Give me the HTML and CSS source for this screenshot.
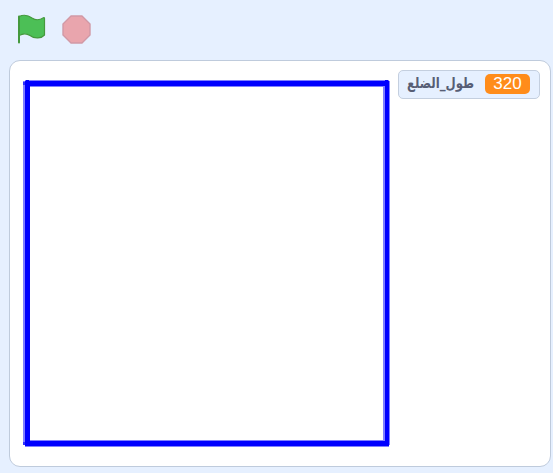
FILE: index.html
```
<!DOCTYPE html>
<html lang="ar">
<head>
<meta charset="utf-8">
<title>Stage</title>
<link rel="stylesheet" href="styles.css">
</head>
<body>
<header class="controls">
  <svg class="icon" viewBox="0 0 30 30" aria-label="Go">
    <path d="M3 2.500C7.500 .5 12 1 16 4C20.500 7 24 6 27.500 3.700Q28.500 3.200 28.500 4.500V21C25.500 24.500 18.500 25 14 21.500C10 18.800 7 19.300 3 21.500Z" fill="#4cbf56" stroke="#45993d" stroke-width="1.200" stroke-linejoin="round"/>
    <path d="M3 2.500V28.500" fill="none" stroke="#45993d" stroke-width="2" stroke-linecap="round"/>
  </svg>
  <svg class="icon" viewBox="0 0 30 30" aria-label="Stop">
    <path d="M10 2H21L29 10V21L21 29H10L2 21V10Z" fill="#e9a5ad" stroke="#d199a6" stroke-width="1.400" stroke-linejoin="round"/>
  </svg>
</header>
<main class="stage">
  <svg class="drawing" viewBox="0 0 367 368" shape-rendering="crispEdges">
    <g fill="#8080ff">
      <path d="M2 1H366V8H2ZM2 361H366V368H2ZM0 2H7V366H0ZM360 2H367V366H360Z"/>
    </g>
    <path d="M2 2H366V367H2ZM7 7V362H362V7Z" fill="#00f" fill-rule="evenodd"/>
    <path d="M3 1H6V2H3ZM362 1H365V2H362Z" fill="#00f"/>
    <path d="M0 3H2V6H0ZM0 363H2V366H0Z" fill="#3030ff"/>
  </svg>
  <div class="monitor" dir="ltr">
    <svg class="label" viewBox="0 0 68 28"><text x="0" y="17" textLength="67" lengthAdjust="spacingAndGlyphs">طول_الضلع</text></svg>
    <span class="value">320</span>
  </div>
</main>
</body>
</html>
```
FILE: styles.css
```
* { box-sizing: border-box; }
body {
  margin: 0;
  width: 553px;
  height: 473px;
  overflow: hidden;
  background: #e6f0ff;
  font-family: "Liberation Sans", "DejaVu Sans", sans-serif;
}
.controls {
  display: flex;
  gap: 15px;
  height: 60px;
  padding: 14px 0 0 16px;
}
.icon { width: 30px; height: 30px; }
.stage {
  display: flex;
  align-items: flex-start;
  width: 542px;
  height: 407px;
  margin-left: 9px;
  border: 1px solid #bfcbdc;
  border-radius: 11px;
  background: #fff;
}
.drawing {
  flex: none;
  width: 367px;
  height: 368px;
  margin: 18px 0 0 13px;
}
.monitor {
  display: flex;
  flex: none;
  align-items: center;
  justify-content: space-between;
  width: 142px;
  height: 29px;
  margin: 9px 0 0 8px;
  padding: 0 9px 0 8px;
  border: 1px solid #c4cfdf;
  border-radius: 5px;
  background: #e6f0ff;
}
.label {
  flex: none;
  width: 68px;
  height: 28px;
  overflow: visible;
  fill: #575e75;
  font-family: "DejaVu Sans", sans-serif;
  font-size: 15px;
  font-weight: 700;
}
.value {
  flex: none;
  width: 45px;
  height: 20px;
  margin-top: -1px;
  border-radius: 5px;
  background: #ff8c1a;
  color: #fff;
  font-size: 17px;
  line-height: 20px;
  text-align: center;
}
```
